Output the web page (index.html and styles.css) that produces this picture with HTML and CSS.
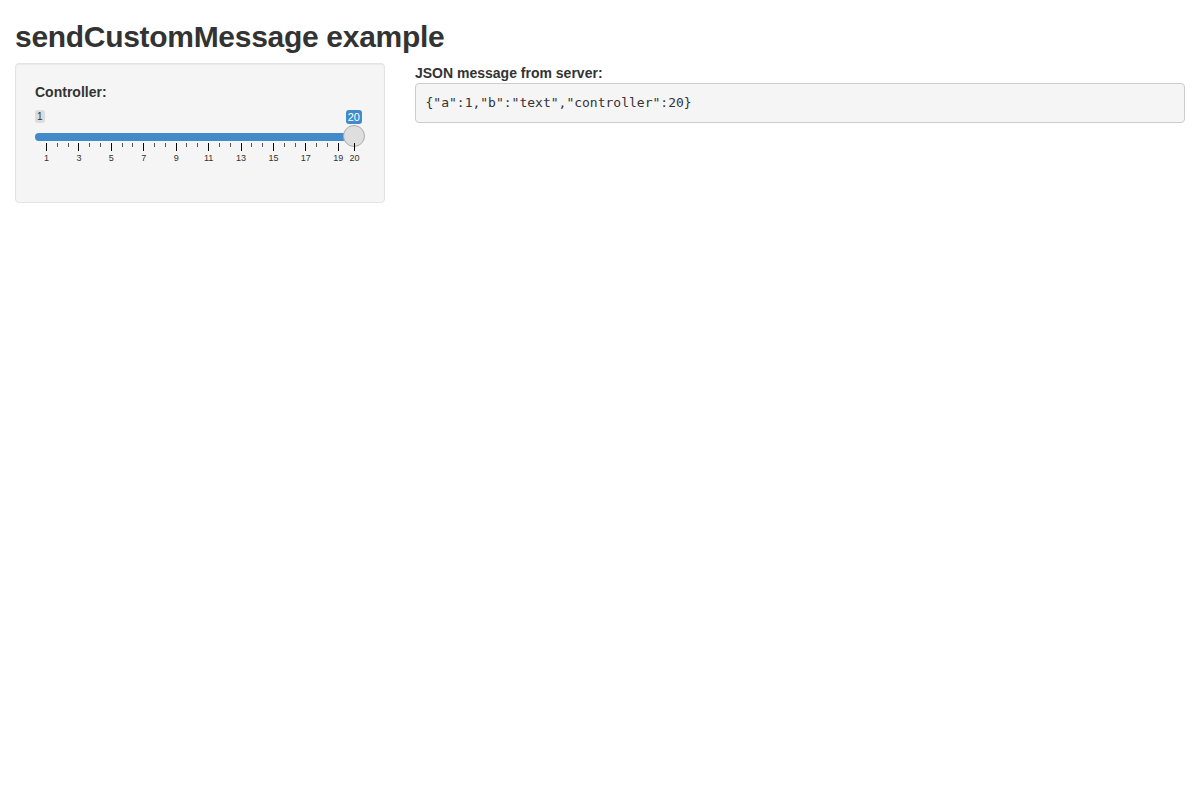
FILE: index.html
```html
<!DOCTYPE html>
<html>
<head>
<meta charset="utf-8">
<title>sendCustomMessage example</title>
<link rel="stylesheet" href="styles.css">
</head>
<body>
<div class="container">
  <h2 class="title">sendCustomMessage example</h2>
  <div class="row">
    <div class="col col-side">
      <div class="well">
        <div class="form-group">
          <label class="control-label">Controller:</label>
          <div class="irs">
            <span class="irs-line"></span>
            <span class="irs-min">1</span>
            <span class="irs-single">20</span>
            <span class="irs-bar"></span>
            <span class="irs-handle"></span>
            <div class="irs-grid">
              <span class="pol" style="left:0%"></span><span class="txt" style="left:0%">1</span>
              <span class="pol small" style="left:3.509%"></span><span class="pol small" style="left:7.018%"></span>
              <span class="pol" style="left:10.526%"></span><span class="txt" style="left:10.526%">3</span>
              <span class="pol small" style="left:14.035%"></span><span class="pol small" style="left:17.544%"></span>
              <span class="pol" style="left:21.053%"></span><span class="txt" style="left:21.053%">5</span>
              <span class="pol small" style="left:24.561%"></span><span class="pol small" style="left:28.070%"></span>
              <span class="pol" style="left:31.579%"></span><span class="txt" style="left:31.579%">7</span>
              <span class="pol small" style="left:35.088%"></span><span class="pol small" style="left:38.596%"></span>
              <span class="pol" style="left:42.105%"></span><span class="txt" style="left:42.105%">9</span>
              <span class="pol small" style="left:45.614%"></span><span class="pol small" style="left:49.123%"></span>
              <span class="pol" style="left:52.632%"></span><span class="txt" style="left:52.632%">11</span>
              <span class="pol small" style="left:56.140%"></span><span class="pol small" style="left:59.649%"></span>
              <span class="pol" style="left:63.158%"></span><span class="txt" style="left:63.158%">13</span>
              <span class="pol small" style="left:66.667%"></span><span class="pol small" style="left:70.175%"></span>
              <span class="pol" style="left:73.684%"></span><span class="txt" style="left:73.684%">15</span>
              <span class="pol small" style="left:77.193%"></span><span class="pol small" style="left:80.702%"></span>
              <span class="pol" style="left:84.211%"></span><span class="txt" style="left:84.211%">17</span>
              <span class="pol small" style="left:87.719%"></span><span class="pol small" style="left:91.228%"></span>
              <span class="pol" style="left:94.737%"></span><span class="txt" style="left:94.737%">19</span>
              <span class="pol" style="left:100%"></span><span class="txt" style="left:100%">20</span>
            </div>
          </div>
        </div>
      </div>
    </div>
    <div class="col col-main">
      <b class="out-label">JSON message from server:</b>
      <pre class="output">{"a":1,"b":"text","controller":20}</pre>
    </div>
  </div>
</div>
</body>
</html>
```
FILE: styles.css
```css
* { box-sizing: border-box; }
html, body { margin: 0; padding: 0; background: #fff; }
body {
  font-family: "Liberation Sans", Arial, sans-serif;
  font-size: 14px;
  line-height: 1.42857;
  color: #333;
}
.container { padding: 0 15px; }
.title {
  margin: 20px 0 10px;
  font-size: 30px;
  line-height: 1.1;
  font-weight: 700;
  letter-spacing: -0.3px;
}
.row {
  display: grid;
  grid-template-columns: 1fr 2fr;
  margin: 0 -15px;
}
.col { padding: 0 15px; min-width: 0; }
.well {
  min-height: 20px;
  padding: 19px;
  margin-bottom: 20px;
  background: #f5f5f5;
  border: 1px solid #e3e3e3;
  border-radius: 4px;
  box-shadow: inset 0 1px 1px rgba(0,0,0,.05);
}
.form-group { margin-bottom: 15px; }
.control-label {
  display: inline-block;
  margin-bottom: 5px;
  font-weight: 700;
  max-width: 100%;
}
.irs {
  position: relative;
  display: block;
  height: 60px;
  font-family: "Liberation Sans", Arial, sans-serif;
}
.irs-line {
  position: absolute;
  left: 0; right: 0;
  top: 25px;
  height: 8px;
  background: linear-gradient(to bottom, #dedede -50%, #fff 150%);
  border: 1px solid #ccc;
  border-radius: 8px;
}
.irs-bar {
  position: absolute;
  top: 25px;
  left: 0;
  width: calc(100% - 11px);
  height: 8px;
  background: #428bca;
  border-radius: 8px 0 0 8px;
}
.irs-handle {
  position: absolute;
  top: 17px;
  right: 0;
  width: 22px;
  height: 22px;
  border: 1px solid #ababab;
  background: #dedede;
  border-radius: 50%;
  box-shadow: 1px 1px 3px rgba(255,255,255,.3);
}
.irs-min {
  position: absolute;
  top: 2px;
  left: 0;
  padding: 1px 2px;
  font-size: 10px;
  line-height: 11px;
  color: #333;
  background: rgba(0,0,0,.1);
  border-radius: 3px;
}
.irs-single {
  position: absolute;
  top: 2px;
  right: 3px;
  padding: 1px 2px;
  font-size: 11px;
  line-height: 12px;
  color: #fff;
  background: #428bca;
  border-radius: 3px;
}
.irs-grid {
  position: absolute;
  left: 11px;
  right: 11px;
  bottom: 0;
  height: 25px;
}
.pol {
  position: absolute;
  top: 0;
  width: 1px;
  height: 8px;
  background: #000;
}
.pol.small { height: 4px; background: #555; }
.txt {
  position: absolute;
  bottom: 5px;
  transform: translateX(-50%);
  font-size: 9px;
  line-height: 9px;
  color: #333;
  white-space: nowrap;
  margin-left: 0.5px;
}
.out-label {
  display: block;
  font-weight: 700;
  line-height: 20px;
}
.output {
  display: block;
  margin: 0 0 10px;
  padding: 9.5px;
  font-family: "DejaVu Sans Mono", Menlo, monospace;
  font-size: 13px;
  line-height: 1.42857;
  color: #333;
  background: #f5f5f5;
  border: 1px solid #ccc;
  border-radius: 4px;
  white-space: pre;
}
```
